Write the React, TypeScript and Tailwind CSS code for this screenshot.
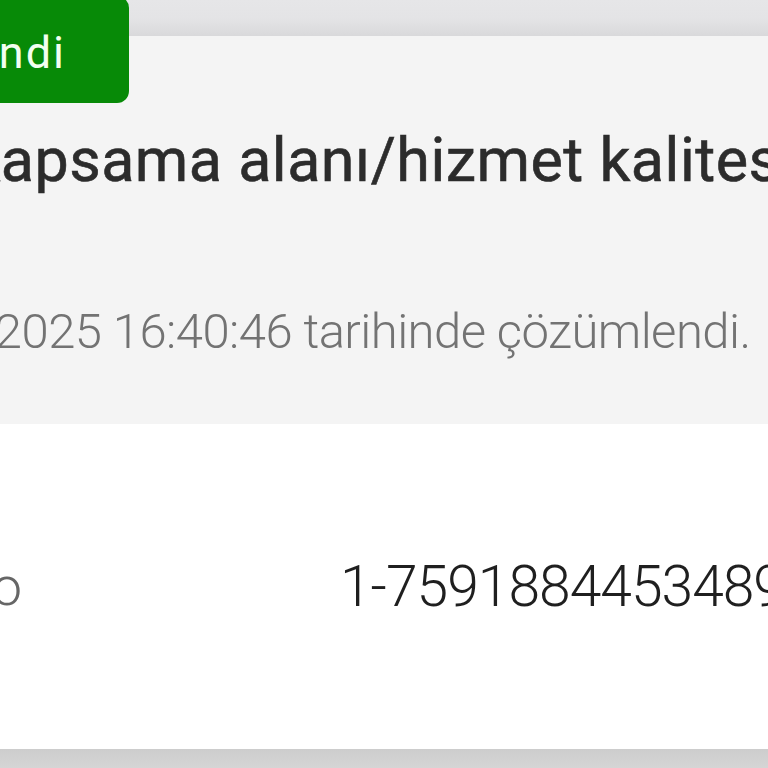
import React from 'react';

const font = { fontFamily: 'Roboto, "Liberation Sans", sans-serif' };

const App = () => {
  return (
    <div className="relative w-[768px] h-[768px] overflow-hidden bg-white" style={font}>
      {/* top strip of the previous card */}
      <div className="h-[36px] bg-gradient-to-b from-[#e6e6e8] via-[#e4e4e6] to-[#d9d9db]" />

      {/* resolved complaint card */}
      <section className="bg-[#f4f4f4] pt-[88px] pb-[64px] whitespace-nowrap">
        <h1 className="-ml-[38px] text-[61px] leading-[72px] font-normal text-[#2c2c2c] tracking-[0.5px] [-webkit-text-stroke:0.6px_#2c2c2c]">
          Kapsama alanı/hizmet kalitesi
        </h1>
        <p className="-ml-[134px] mt-[108px] text-[49px] leading-[56px] font-light text-[#737373] tracking-[-0.55px]">
          15.07.2025 16:40:46 tarihinde çözümlendi.
        </p>
      </section>

      {/* detail row */}
      <div className="h-[325px] flex items-center whitespace-nowrap">
        <div className="-ml-[300px] flex items-center">
          <span className="w-[322px] shrink-0 text-right text-[54px] leading-[64px] font-light text-[#666666]">
            Talep No
          </span>
          <span className="ml-[318px] text-[57px] leading-[64px] font-light text-[#1f1f1f] tracking-[-1px]">
            1-7591884453489
          </span>
        </div>
      </div>

      <div className="h-[40px] bg-gradient-to-b from-[#cdcdcd] to-[#dedede]" />

      {/* status badge */}
      <div className="absolute left-[-171px] top-[-4px] h-[107px] w-[300px] rounded-[12px] bg-[#078a07] flex justify-end items-start pt-[34px] pr-[63px]">
        <span className="text-[45px] leading-[45px] text-[#f2fff0] tracking-[2px]">Çözümlendi</span>
      </div>
    </div>
  );
};

export default App;
